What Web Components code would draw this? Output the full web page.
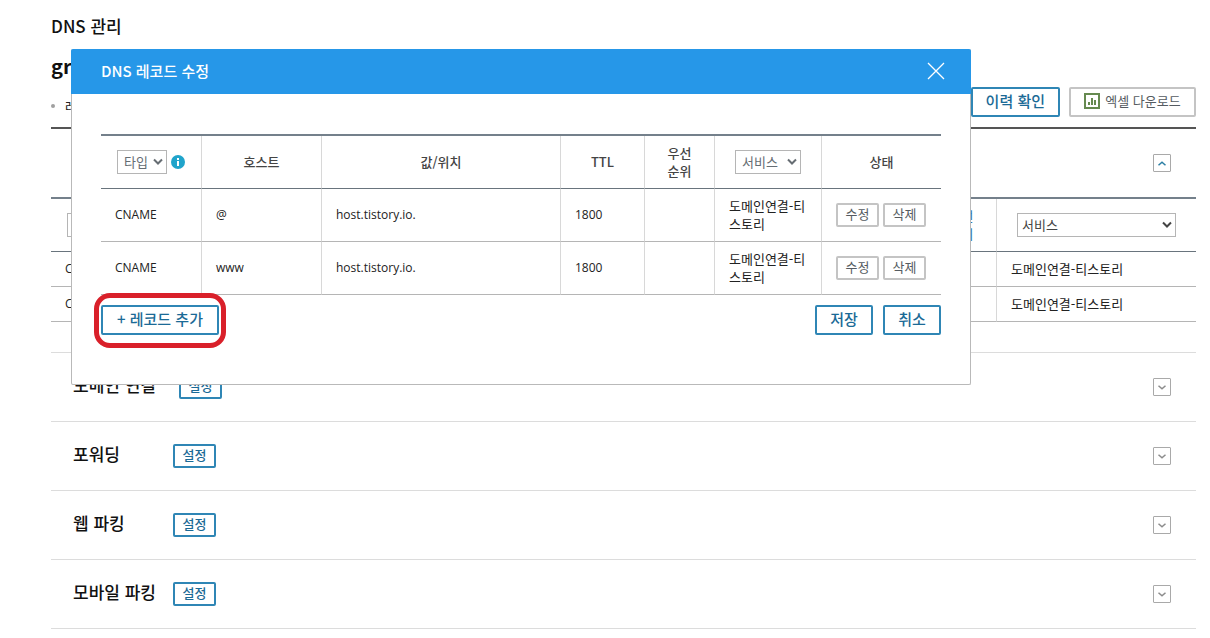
<!DOCTYPE html>
<html lang="ko">
<head>
<meta charset="utf-8">
<title>DNS 관리</title>
<style>
  body {
    margin: 0;
    background: #fff;
    color: #222;
    font: 13px/18px "Noto Sans CJK KR", "Noto Sans", sans-serif;
  }
</style>
</head>
<body>
<dns-page></dns-page>

<template id="t-button">
  <style>
    :host { display: inline-block; flex: none; }
    button {
      display: flex; align-items: center; justify-content: center; gap: 5px;
      box-sizing: border-box; width: 100%; min-width: 58px; height: 30px; padding: 0 13px 2px;
      border: 2px solid #2f86b5; border-radius: 2px; background: #fff;
      color: #1b6a96; font: 500 15px/20px "Noto Sans CJK KR", sans-serif; white-space: nowrap; cursor: pointer;
    }
    :host([size="small"]) button { width: 43px; min-width: 0; height: 24px; padding: 0 0 2px; font-size: 13px; line-height: 18px; }
    :host([tone="gray"]) button { border-color: #c4c4c4; color: #555b61; font-size: 13px; font-weight: 400; }
  </style>
  <button type="button"><slot name="icon"></slot><slot></slot></button>
</template>

<template id="t-select">
  <style>
    :host { display: inline-grid; vertical-align: middle; }
    select {
      grid-area: 1 / 1; appearance: none; box-sizing: border-box; width: 100%; height: 24px;
      margin: 0; padding: 0 18px 0 var(--select-indent, 6px); border: 1px solid #b5b5b5; border-radius: 0; background: #fff;
      color: inherit; font: 13px/18px "Noto Sans CJK KR", sans-serif;
    }
    svg { grid-area: 1 / 1; place-self: center end; margin-right: 4px; pointer-events: none; }
  </style>
  <select><option></option></select>
  <svg width="10" height="8" viewBox="0 0 10 8" fill="none" stroke="currentColor" stroke-width="2"><path d="M1 1.5l4 4 4-4"/></svg>
</template>

<template id="t-toggle">
  <style>
    :host { display: block; flex: none; }
    button {
      display: grid; place-items: center; box-sizing: border-box; width: 18px; height: 18px;
      padding: 0; border: 1px solid #a9a9a9; border-radius: 1px; background: #fff; color: #8c8c8c; cursor: pointer;
    }
    :host([open]) button { color: #2c7fa5; }
    :host([open]) svg { transform: rotate(180deg); }
  </style>
  <button type="button" aria-label="펼치기"><svg width="8" height="5" viewBox="0 0 8 5" fill="none" stroke="currentColor" stroke-width="1.5"><path d="M.5 .7L4 3.8 7.5 .7"/></svg></button>
</template>

<template id="t-row">
  <style>
    :host { display: flex; align-items: center; box-sizing: border-box; height: 69px; padding: 0 25px 0 22px; border-bottom: 1px solid #dcdcdc; }
    h3 { width: 100px; margin: 0; padding-bottom: 4px; font-size: 17px; line-height: 24px; font-weight: 500; color: #111; white-space: nowrap; }
    :host([wide]) h3 { width: 106px; }
    ui-toggle { margin-left: auto; }
  </style>
  <h3><slot></slot></h3>
  <ui-button size="small">설정</ui-button>
  <ui-toggle></ui-toggle>
</template>

<template id="t-dialog">
  <style>
    :host { display: block; box-sizing: border-box; background: #fff; border: 1px solid #b9b9b9; border-top: 0; border-radius: 2px; }
    header {
      display: flex; align-items: center; justify-content: space-between; box-sizing: border-box; height: 45px; margin: 0 -1px;
      padding: 0 26px 2px 30px; background: #2697e8; color: #fff; border-radius: 2px 2px 0 0;
    }
    h2 { margin: 0; font-size: 15px; line-height: 20px; font-weight: 500; }
    header button { display: block; padding: 0; border: 0; background: none; color: inherit; cursor: pointer; }
    header svg { display: block; }
    .body { padding: 40px 29px 49px; }
    table { width: 100%; border-collapse: separate; border-spacing: 0; border-top: 2px solid #74808b; table-layout: fixed; }
    th, td { box-sizing: border-box; height: 53px; padding: 0 14px; border-right: 1px solid #d8d8d8; border-bottom: 1px solid #b5b5b5; text-align: left; }
    th { border-bottom-color: #69747d; font-weight: 500; color: #444; text-align: center; }
    th:last-child, td:last-child { border-right: 0; }
    td.latin { font-family: "Open Sans", "Noto Sans", sans-serif; font-size: 12px; }
    td.service { word-break: break-all; padding-right: 12px; }
    .select-cell { color: #666d73; font-weight: 400; }
    .type { display: flex; align-items: center; gap: 4px; margin-left: 2px; }
    .type ui-select { width: 50px; }
    .select-cell > ui-select { width: 66px; }
    .actions { display: flex; gap: 4px; }
    .info { flex: none; }
    footer { display: flex; align-items: center; gap: 10px; margin-top: 10px; }
    .add { position: relative; width: 118px; margin-right: auto; }
    .mark { position: absolute; inset: -12px -7px -13px; border: 5px solid #d9202a; border-radius: 16px; pointer-events: none; }
    .add ui-button { display: block; }
  </style>
  <header>
    <h2>DNS 레코드 수정</h2>
    <button type="button" aria-label="닫기"><svg width="18" height="18" viewBox="0 0 18 18" stroke="currentColor" stroke-width="1.3"><path d="M1 1l16 16M17 1L1 17"/></svg></button>
  </header>
  <div class="body">
    <table>
      <colgroup><col style="width:101px"><col style="width:120px"><col><col style="width:84px"><col style="width:70px"><col style="width:107px"><col style="width:119px"></colgroup>
      <thead>
        <tr>
          <th class="select-cell"><div class="type"><ui-select label="타입"></ui-select><svg class="info" width="14" height="14" viewBox="0 0 14 14"><circle cx="7" cy="7" r="7" fill="#20a4cb"/><path d="M6 3h2v2H6zM6 6h2v5H6z" fill="#fff"/></svg></div></th>
          <th>호스트</th><th>값/위치</th><th>TTL</th><th>우선<br>순위</th>
          <th class="select-cell"><ui-select label="서비스"></ui-select></th><th>상태</th>
        </tr>
      </thead>
      <tbody></tbody>
    </table>
    <footer>
      <div class="add"><ui-button>+ 레코드 추가</ui-button><div class="mark"></div></div>
      <ui-button>저장</ui-button>
      <ui-button>취소</ui-button>
    </footer>
  </div>
</template>

<template id="t-page">
  <style>
    :host { display: block; position: relative; padding: 14px 14px 9px 51px; }
    h1 { margin: 0; font-size: 17px; line-height: 24px; font-weight: 500; color: #111; }
    h2 { margin: 14px 0 0; font-size: 20px; line-height: 28px; font-weight: 700; color: #111; }
    .bar { display: flex; gap: 9px; align-items: center; height: 30px; margin-top: 7px; padding-bottom: 10px; border-bottom: 2px solid #555; }
    .note { display: flex; align-items: center; gap: 10px; margin-right: auto; padding-top: 8px; }
    .note::before { content: ""; width: 4px; height: 4px; border-radius: 50%; background: #a0a0a0; }
    .excel { width: 127px; }
    .head { display: flex; align-items: center; justify-content: flex-end; height: 68px; padding-right: 25px; }
    .panel { padding-bottom: 30px; border-bottom: 1px solid #dcdcdc; }
    table { width: 100%; border-collapse: separate; border-spacing: 0; border-top: 2px solid #74808b; table-layout: fixed; }
    th, td { box-sizing: border-box; height: 35px; padding: 0 14px; border-right: 1px solid #d8d8d8; border-bottom: 1px solid #b5b5b5; text-align: left; font-weight: 400; }
    th { height: 53px; border-bottom-color: #69747d; }
    th:last-child, td:last-child { border-right: 0; }
    td.latin { font-family: "Open Sans", "Noto Sans", sans-serif; font-size: 12px; }
    th.priority { text-align: center; color: #2676ad; padding: 0; }
    .type { width: 50px; margin-left: 2px; }
    .service { --select-indent: 4px; width: 159px; margin-left: 6px; color: #444; }
    dns-dialog { position: absolute; top: 49px; left: 71px; width: 900px; max-width: calc(100% - 85px); }
  </style>
  <h1>DNS 관리</h1>
  <h2>gr</h2>
  <div class="bar">
    <span class="note">레</span>
    <ui-button>이력 확인</ui-button>
    <ui-button class="excel" tone="gray">
      <svg slot="icon" width="16" height="16" viewBox="0 0 16 16" fill="none" stroke="#668a50" stroke-width="2"><path d="M1 1h14v14H1zM5 9v3M8 5v7M11 7v5"/></svg>엑셀 다운로드</ui-button>
  </div>
  <section class="panel">
    <div class="head"><ui-toggle open></ui-toggle></div>
    <table>
      <colgroup><col style="width:101px"><col><col style="width:70px"><col style="width:199px"></colgroup>
      <thead><tr><th><ui-select class="type"></ui-select></th><th></th><th class="priority">우선<br>순위</th><th><ui-select class="service" label="서비스"></ui-select></th></tr></thead>
      <tbody>
        <tr><td class="latin">CNAME</td><td></td><td></td><td>도메인연결-티스토리</td></tr>
        <tr><td class="latin">CNAME</td><td></td><td></td><td>도메인연결-티스토리</td></tr>
      </tbody>
    </table>
  </section>
  <setting-row wide>도메인 연결</setting-row>
  <setting-row>포워딩</setting-row>
  <setting-row>웹 파킹</setting-row>
  <setting-row>모바일 파킹</setting-row>
  <dns-dialog role="dialog" aria-label="DNS 레코드 수정"></dns-dialog>
</template>

<script>
  class Base extends HTMLElement {
    constructor() {
      super();
      const t = document.getElementById(this.constructor.tpl);
      this.attachShadow({ mode: "open" }).append(t.content.cloneNode(true));
    }
  }
  const define = (name, tpl) =>
    customElements.define(name, class extends Base { static tpl = tpl; });

  define("ui-button", "t-button");
  define("ui-toggle", "t-toggle");

  customElements.define("ui-select", class extends Base {
    static tpl = "t-select";
    connectedCallback() {
      const label = this.getAttribute("label") || "";
      this.shadowRoot.querySelector("option").textContent = label;
      this.shadowRoot.querySelector("select").setAttribute("aria-label", label || "타입");
    }
  });

  define("setting-row", "t-row");

  customElements.define("dns-dialog", class extends Base {
    static tpl = "t-dialog";
    connectedCallback() {
      this.shadowRoot.querySelector("tbody").innerHTML = ["@", "www"].map(host => `
        <tr><td class="latin">CNAME</td><td class="latin">${host}</td><td class="latin">host.tistory.io.</td><td class="latin">1800</td><td></td>
        <td class="service">도메인연결-티스토리</td>
        <td><div class="actions"><ui-button size="small" tone="gray">수정</ui-button><ui-button size="small" tone="gray">삭제</ui-button></div></td></tr>`).join("");
    }
  });

  define("dns-page", "t-page");
</script>
</body>
</html>
